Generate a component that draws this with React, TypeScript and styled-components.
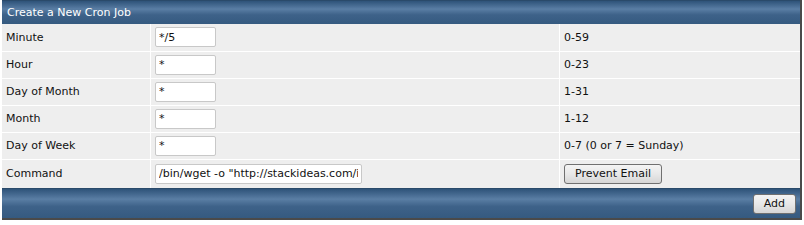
import React from "react";
import styled, { createGlobalStyle } from "styled-components";

const GlobalStyle = createGlobalStyle`
  body {
    margin: 0;
    background: #ffffff;
    font-family: Tahoma, "DejaVu Sans", Verdana, sans-serif;
  }
`;

const Panel = styled.div`
  margin-left: 2px;
  width: 798px;
  border-right: 2px solid #4a4a4a;
  border-bottom: 2px solid #4a4a4a;
  background: #eeeeee;
`;

const Bar = styled.div<{ $tall?: boolean }>`
  height: ${({ $tall }) => ($tall ? "29px" : "23px")};
  border-top: 1px solid #2a4a6a;
  background: linear-gradient(
    to bottom,
    #2e5379 0%,
    #4d7198 25%,
    #5a7ea4 35%,
    #3e6289 60%,
    #355a80 100%
  );
  color: #ffffff;
  font-size: 11px;
  display: flex;
  align-items: center;
  justify-content: ${({ $tall }) => ($tall ? "flex-end" : "flex-start")};
  padding: 0 4px 0 5px;
`;

const Table = styled.table`
  width: 100%;
  border-collapse: collapse;
  font-size: 11px;
  color: #111;
`;

const Row = styled.tr`
  height: 27px;
  border-bottom: 1px solid #ffffff;
  &:last-child {
    border-bottom: none;
    height: 29px;
  }
`;

const Cell = styled.td<{ $w?: number }>`
  padding: 0 4px;
  width: ${({ $w }) => ($w ? `${$w}px` : "auto")};
  border-left: 1px solid #ffffff;
  &:first-child {
    border-left: none;
  }
`;

const Field = styled.input<{ $wide?: boolean }>`
  box-sizing: border-box;
  width: ${({ $wide }) => ($wide ? "207px" : "61px")};
  height: 20px;
  border: 1px solid #c8c8c8;
  border-radius: 2px;
  background: #ffffff;
  font-family: Tahoma, "DejaVu Sans", Verdana, sans-serif;
  font-size: 11px;
  padding: 0 3px;
  color: #111;
  vertical-align: middle;
`;

const Button = styled.button`
  height: 20px;
  padding: 0 10px;
  border: 1px solid #707070;
  border-radius: 3px;
  background: linear-gradient(to bottom, #f4f4f4 0%, #e8e8e8 50%, #d6d6d6 100%);
  font-family: Tahoma, "DejaVu Sans", Verdana, sans-serif;
  font-size: 11px;
  color: #111;
`;

const rows = [
  { label: "Minute", value: "*/5", hint: "0-59" },
  { label: "Hour", value: "*", hint: "0-23" },
  { label: "Day of Month", value: "*", hint: "1-31" },
  { label: "Month", value: "*", hint: "1-12" },
  { label: "Day of Week", value: "*", hint: "0-7 (0 or 7 = Sunday)" },
];

export default function App() {
  return (
    <>
      <GlobalStyle />
      <Panel>
        <Bar>Create a New Cron Job</Bar>
        <Table>
          <tbody>
            {rows.map((r) => (
              <Row key={r.label}>
                <Cell $w={140}>{r.label}</Cell>
                <Cell $w={400}>
                  <Field defaultValue={r.value} />
                </Cell>
                <Cell>{r.hint}</Cell>
              </Row>
            ))}
            <Row>
              <Cell $w={140}>Command</Cell>
              <Cell $w={400}>
                <Field $wide defaultValue={'/bin/wget -o "http://stackideas.com/index.php'} />
              </Cell>
              <Cell>
                <Button>Prevent Email</Button>
              </Cell>
            </Row>
          </tbody>
        </Table>
        <Bar $tall>
          <Button>Add</Button>
        </Bar>
      </Panel>
    </>
  );
}
